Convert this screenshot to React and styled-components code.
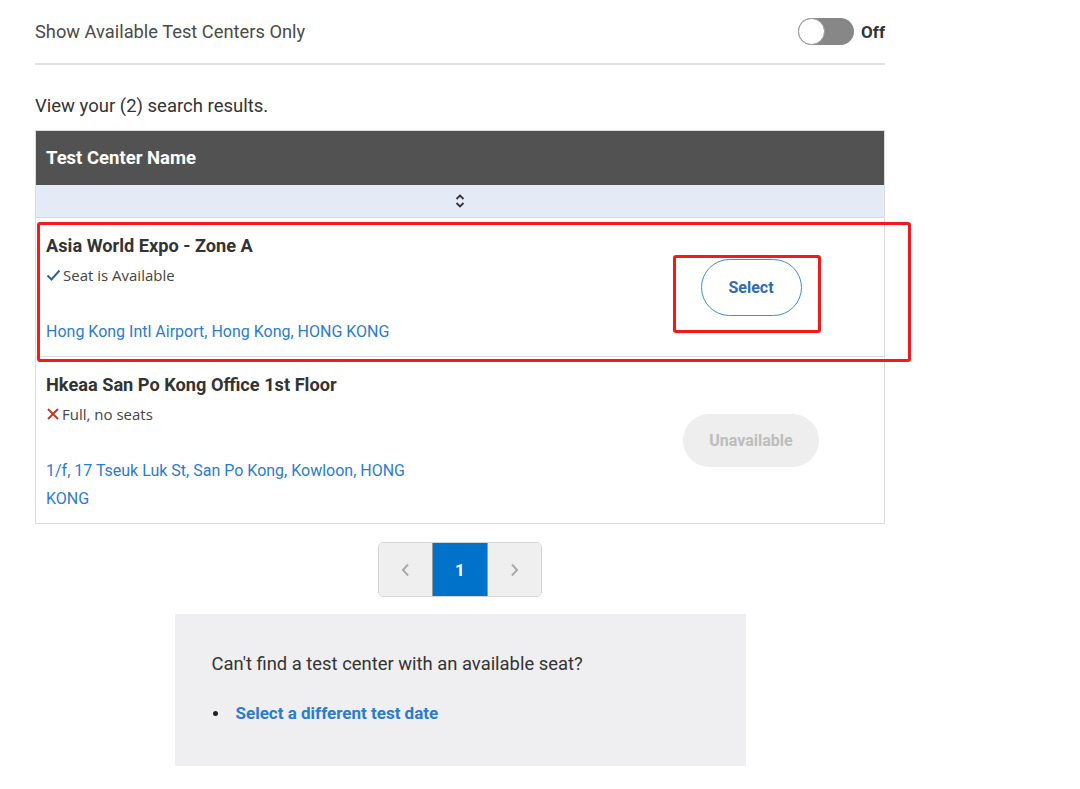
import React from 'react';
import styled, { createGlobalStyle } from 'styled-components';

const GlobalStyle = createGlobalStyle`
  body {
    margin: 0;
    background: #fff;
    font-family: Roboto, "Liberation Sans", Arial, sans-serif;
    color: #333;
  }
`;

const centers = [
  {
    name: 'Asia World Expo - Zone A',
    available: true,
    status: 'Seat is Available',
    address: 'Hong Kong Intl Airport, Hong Kong, HONG KONG',
  },
  {
    name: 'Hkeaa San Po Kong Office 1st Floor',
    available: false,
    status: 'Full, no seats',
    address: '1/f, 17 Tseuk Luk St, San Po Kong, Kowloon, HONG KONG',
  },
];

const CheckIcon = () => (
  <svg width="15" height="12" viewBox="0 0 15 12">
    <path d="M1.5 6.5 L5.5 10.5 L13.5 1.5" fill="none" stroke="#2f6496" strokeWidth="2" />
  </svg>
);

const CrossIcon = () => (
  <svg width="14" height="14" viewBox="0 0 14 14">
    <path d="M2 2 L12 12 M12 2 L2 12" fill="none" stroke="#c0392b" strokeWidth="2" />
  </svg>
);

const SortIcon = () => (
  <svg width="10" height="16" viewBox="0 0 10 16">
    <path d="M1.5 6 L5 2.5 L8.5 6 M1.5 10 L5 13.5 L8.5 10" fill="none" stroke="#333" strokeWidth="1.8" />
  </svg>
);

const Chevron = ({ dir }) => (
  <svg width="9" height="14" viewBox="0 0 9 14">
    <path
      d={dir === 'left' ? 'M7 1.5 L2 7 L7 12.5' : 'M2 1.5 L7 7 L2 12.5'}
      fill="none"
      stroke="#aaa"
      strokeWidth="2"
    />
  </svg>
);

const App = () => {
  return (
    <Page>
      <GlobalStyle />
      <FilterBar>
        <FilterLabel>Show Available Test Centers Only</FilterLabel>
        <ToggleWrap>
          <Track>
            <Knob />
          </Track>
          <ToggleText>Off</ToggleText>
        </ToggleWrap>
      </FilterBar>

      <ResultsText>View your (2) search results.</ResultsText>

      <Table>
        <HeaderRow>Test Center Name</HeaderRow>
        <SortRow>
          <SortIcon />
        </SortRow>
        {centers.map((c, i) => (
          <Row key={c.name} last={i === centers.length - 1}>
            {c.available && <Highlight />}
            <InfoCol>
              <CenterName>{c.name}</CenterName>
              <Status>
                {c.available ? <CheckIcon /> : <CrossIcon />}
                {c.status}
              </Status>
              <Address>{c.address}</Address>
            </InfoCol>
            <ActionCol>
              {c.available ? (
                <ButtonWrap>
                  <SelectButton>Select</SelectButton>
                  <ButtonHighlight />
                </ButtonWrap>
              ) : (
                <DisabledButton>Unavailable</DisabledButton>
              )}
            </ActionCol>
          </Row>
        ))}
      </Table>

      <Pager>
        <PageCell>
          <Chevron dir="left" />
        </PageCell>
        <PageCell active>1</PageCell>
        <PageCell>
          <Chevron dir="right" />
        </PageCell>
      </Pager>

      <HelpBox>
        <HelpText>Can't find a test center with an available seat?</HelpText>
        <HelpList>
          <HelpItem>
            <HelpLink href="#">Select a different test date</HelpLink>
          </HelpItem>
        </HelpList>
      </HelpBox>
    </Page>
  );
};

export default App;

const Page = styled.div`
  width: 850px;
  padding-left: 35px;
  padding-bottom: 24px;
`;

const FilterBar = styled.div`
  display: flex;
  align-items: center;
  justify-content: space-between;
  height: 63px;
  border-bottom: 2px solid #e2e2e2;
`;

const FilterLabel = styled.span`
  font-size: 18.3px;
  color: #4a4a4a;
`;

const ToggleWrap = styled.div`
  display: flex;
  align-items: center;
  gap: 7px;
`;

const Track = styled.div`
  position: relative;
  width: 56px;
  height: 27px;
  border-radius: 14px;
  background: #878787;
`;

const Knob = styled.div`
  position: absolute;
  left: 0;
  top: 0;
  width: 25px;
  height: 25px;
  border-radius: 50%;
  background: #fff;
  border: 1px solid #9a9a9a;
`;

const ToggleText = styled.span`
  font-size: 17px;
  font-weight: 700;
  color: #333;
`;

const ResultsText = styled.div`
  margin-top: 31px;
  font-size: 18.5px;
  line-height: 20px;
  color: #333;
`;

const Table = styled.div`
  margin-top: 14px;
  border: 1px solid #dcdcdc;
`;

const HeaderRow = styled.div`
  height: 54px;
  display: flex;
  align-items: center;
  padding-left: 10px;
  background: #525252;
  color: #fff;
  font-size: 18.5px;
  font-weight: 700;
`;

const SortRow = styled.div`
  height: 32px;
  display: flex;
  align-items: center;
  justify-content: center;
  background: #e4ebf6;
  border-bottom: 1px solid #d6dbe2;
`;

const Row = styled.div`
  position: relative;
  display: flex;
  align-items: center;
  padding-left: 10px;
  border-bottom: ${(p) => (p.last ? 'none' : '1px solid #dcdcdc')};
`;

const Highlight = styled.div`
  position: absolute;
  top: 4px;
  left: 1px;
  right: -27px;
  bottom: -6px;
  border: 3px solid #f5191b;
  border-radius: 3px;
  pointer-events: none;
`;

const InfoCol = styled.div`
  width: 380px;
  padding: 16px 0 10px;
  display: flex;
  flex-direction: column;
`;

const CenterName = styled.div`
  font-size: 18.2px;
  line-height: 24px;
  font-weight: 700;
  color: #333;
`;

const Status = styled.div`
  margin-top: 6px;
  display: flex;
  align-items: center;
  gap: 2px;
  font-family: "Open Sans", "Noto Sans", sans-serif;
  font-size: 15px;
  line-height: 22px;
  color: #444;
`;

const Address = styled.div`
  margin-top: 32px;
  font-size: 16px;
  line-height: 28px;
  color: #2a7cd0;
`;

const ActionCol = styled.div`
  margin-left: auto;
  width: 266px;
  display: flex;
  justify-content: center;
`;

const ButtonWrap = styled.div`
  position: relative;
  display: flex;
`;

const SelectButton = styled.button`
  width: 101px;
  height: 57px;
  border: 1.5px solid #3d8fd6;
  border-radius: 29px;
  background: #fff;
  color: #2c6cb5;
  font-family: Roboto, "Liberation Sans", sans-serif;
  font-size: 16px;
  font-weight: 700;
  cursor: pointer;
`;

const ButtonHighlight = styled.div`
  position: absolute;
  top: -4px;
  left: -28px;
  right: -19px;
  bottom: -17px;
  border: 3px solid #f5191b;
  border-radius: 3px;
  pointer-events: none;
`;

const DisabledButton = styled.button`
  width: 136px;
  height: 53px;
  border: none;
  border-radius: 27px;
  background: #eeeeee;
  color: #bdbdbd;
  font-family: Roboto, "Liberation Sans", sans-serif;
  font-size: 16px;
  font-weight: 700;
`;

const Pager = styled.div`
  margin: 18px auto 0;
  width: 164px;
  height: 55px;
  display: flex;
  border: 1px solid #d4d4d4;
  border-radius: 5px;
  overflow: hidden;
  box-sizing: border-box;
`;

const PageCell = styled.div`
  flex: 1;
  display: flex;
  align-items: center;
  justify-content: center;
  background: ${(p) => (p.active ? '#0072c9' : '#efefef')};
  color: #fff;
  font-size: 17px;
  font-weight: 700;
  border-left: ${(p) => (p.active ? '1px solid #999' : 'none')};
  border-right: ${(p) => (p.active ? '1px solid #999' : 'none')};
`;

const HelpBox = styled.div`
  margin: 17px auto 0;
  width: 571px;
  box-sizing: border-box;
  padding: 38px 37px 40px;
  background: #efeff1;
`;

const HelpText = styled.div`
  font-size: 18.4px;
  line-height: 24px;
  color: #333;
`;

const HelpList = styled.ul`
  margin: 25px 0 0;
  padding: 0;
  list-style: none;
`;

const HelpItem = styled.li`
  position: relative;
  padding-left: 24px;
  line-height: 24px;

  &::before {
    content: '';
    position: absolute;
    left: 1px;
    top: 10px;
    width: 5px;
    height: 5px;
    border-radius: 50%;
    background: #222;
  }
`;

const HelpLink = styled.a`
  font-size: 17px;
  font-weight: 700;
  color: #2a7cd0;
  text-decoration: none;
`;
